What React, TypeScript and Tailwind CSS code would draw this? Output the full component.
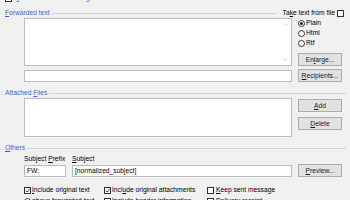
import React from "react";

function Acc({ text, at }: { text: string; at?: number }) {
  if (at === undefined) return <>{text}</>;
  return (
    <>
      {text.slice(0, at)}
      <span className="underline underline-offset-[1px]">{text[at]}</span>
      {text.slice(at + 1)}
    </>
  );
}

function CheckBox({ checked }: { checked?: boolean }) {
  return (
    <span className="flex h-[7px] w-[7px] shrink-0 items-center justify-center border border-[#333] bg-white">
      {checked && (
        <svg width="5" height="5" viewBox="0 0 5 5">
          <path d="M0.6 2.6 L2 4 L4.5 1" fill="none" stroke="#222" strokeWidth="0.8" />
        </svg>
      )}
    </span>
  );
}

function Radio({ checked }: { checked?: boolean }) {
  return (
    <span className="flex h-[7px] w-[7px] shrink-0 items-center justify-center rounded-full border border-[#333] bg-white">
      {checked && <span className="h-[3px] w-[3px] rounded-full bg-[#222]" />}
    </span>
  );
}

function Button({ label, at }: { label: string; at?: number }) {
  return (
    <div className="flex h-[13px] w-[44px] items-center justify-center border border-[#adadad] bg-[#e1e1e1] text-[#1a1a1a]">
      <Acc text={label} at={at} />
    </div>
  );
}

function GroupHeader({
  label,
  at,
  children,
}: {
  label: string;
  at?: number;
  children?: React.ReactNode;
}) {
  return (
    <div className="flex h-[8px] items-center">
      <span className="text-[#3169d6]">
        <Acc text={label} at={at} />
      </span>
      <div className="ml-[2px] h-px flex-1 bg-[#d2d2d2]" />
      {children}
    </div>
  );
}

function Chevron({ up }: { up?: boolean }) {
  return (
    <svg width="5" height="3" viewBox="0 0 5 3">
      <path
        d={up ? "M0.5 2.5 L2.5 0.5 L4.5 2.5" : "M0.5 0.5 L2.5 2.5 L4.5 0.5"}
        fill="none"
        stroke="#b8b8b8"
        strokeWidth="0.7"
      />
    </svg>
  );
}

export default function App() {
  return (
    <div className="h-[200px] w-[350px] overflow-hidden bg-[#f0f0f0] pl-[5px] pr-[4px] font-['Liberation_Sans',Arial,sans-serif] text-[6.7px] leading-[8px] text-black">
      {/* row cut off at the top */}
      <div className="-mt-[6px] flex h-[8px] items-center gap-[2px]">
        <CheckBox />
        <span className="text-[#3169d6]">Ignore forwarded message</span>
      </div>

      {/* Forwarded text */}
      <div className="mt-[7px]">
        <GroupHeader label="Forwarded text" at={0}>
          <span className="ml-[6px]">
            <Acc text="Take text from file" at={2} />
          </span>
          <span className="ml-[2px] mr-[2px]">
            <CheckBox />
          </span>
        </GroupHeader>
      </div>

      <div className="mt-[1px] flex gap-[6px] pl-[19px]">
        <div className="flex h-[48px] w-[268px] justify-end border border-[#bcbcbc] bg-white">
          <div className="flex w-[11px] flex-col items-center justify-between py-[4px]">
            <Chevron up />
            <Chevron />
          </div>
        </div>
        <div className="flex w-[44px] flex-col">
          <div className="flex h-[10px] items-center gap-[1px]">
            <Radio checked />
            <span>Plain</span>
          </div>
          <div className="flex h-[10px] items-center gap-[1px]">
            <Radio />
            <span>Html</span>
          </div>
          <div className="flex h-[10px] items-center gap-[1px]">
            <Radio />
            <span>Rtf</span>
          </div>
          <div className="mt-[5px]">
            <Button label="Enlarge..." at={2} />
          </div>
        </div>
      </div>

      <div className="mt-[3px] flex items-center gap-[6px] pl-[19px]">
        <div className="h-[12px] w-[268px] border border-[#bcbcbc] bg-white" />
        <Button label="Recipients..." at={0} />
      </div>

      {/* Attached Files */}
      <div className="mt-[7px]">
        <GroupHeader label="Attached Files" at={9} />
      </div>
      <div className="mt-[1px] flex gap-[6px] pl-[19px]">
        <div className="h-[39px] w-[268px] border border-[#bcbcbc] bg-white" />
        <div className="flex flex-col gap-[5px] pt-[1px]">
          <Button label="Add" at={0} />
          <Button label="Delete" at={0} />
        </div>
      </div>

      {/* Others */}
      <div className="mt-[7px]">
        <GroupHeader label="Others" at={0} />
      </div>
      <div className="mt-[3px] flex h-[8px] items-center gap-[6px] pl-[19px]">
        <span className="w-[42px]">
          <Acc text="Subject Prefix" at={8} />
        </span>
        <span>
          <Acc text="Subject" at={0} />
        </span>
      </div>
      <div className="mt-[1px] flex items-center gap-[6px] pl-[19px]">
        <div className="flex h-[12px] w-[42px] items-center border border-[#bcbcbc] bg-white px-[2px]">
          FW:
        </div>
        <div className="flex h-[12px] w-[220px] items-center border border-[#bcbcbc] bg-white px-[2px]">
          [normalized_subject]
        </div>
        <Button label="Preview..." at={0} />
      </div>

      <div className="mt-[9px] grid grid-cols-[80px_103px_1fr] gap-y-[3px] pl-[19px]">
        <div className="flex h-[8px] items-center gap-[1px]">
          <CheckBox checked />
          <span>
            <Acc text="Include original text" at={0} />
          </span>
        </div>
        <div className="flex h-[8px] items-center gap-[1px]">
          <CheckBox checked />
          <span>
            <Acc text="Include original attachments" at={4} />
          </span>
        </div>
        <div className="flex h-[8px] items-center gap-[2px]">
          <CheckBox />
          <span>
            <Acc text="Keep sent message" at={0} />
          </span>
        </div>
        <div className="flex h-[8px] items-center gap-[1px]">
          <Radio />
          <span>above forwarded text</span>
        </div>
        <div className="flex h-[8px] items-center gap-[1px]">
          <CheckBox checked />
          <span>Include header information</span>
        </div>
        <div className="flex h-[8px] items-center gap-[2px]">
          <CheckBox />
          <span>
            <Acc text="Delivery receipt" at={0} />
          </span>
        </div>
      </div>
    </div>
  );
}
